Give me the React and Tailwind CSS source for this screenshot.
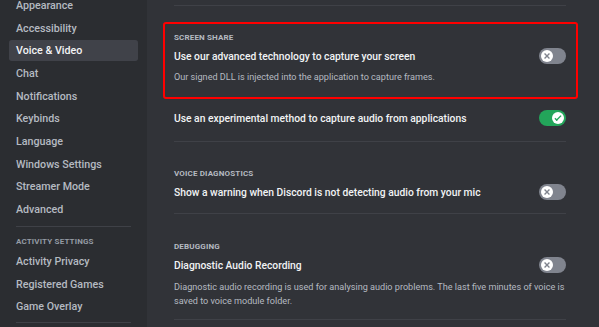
import React from "react";

const sideItems = [
  "Appearance",
  "Accessibility",
  "Voice & Video",
  "Chat",
  "Notifications",
  "Keybinds",
  "Language",
  "Windows Settings",
  "Streamer Mode",
  "Advanced",
];

const activityItems = ["Activity Privacy", "Registered Games", "Game Overlay"];

function SideItem({ label, selected }) {
  return (
    <div
      className={`h-[21.33px] mb-[1.33px] px-[6.67px] pt-[2px] flex items-center rounded-[2.67px] text-[10.7px] font-medium whitespace-nowrap ${
        selected ? "bg-[#404249] text-[#f2f3f5]" : "text-[#b5bac1]"
      }`}
    >
      {label}
    </div>
  );
}

function Toggle({ on }) {
  return (
    <div
      className={`w-[26.67px] h-[16px] shrink-0 rounded-full flex items-center px-[2px] ${
        on ? "bg-[#23a55a] justify-end" : "bg-[#80848e] justify-start"
      }`}
    >
      <div className="w-[12px] h-[12px] rounded-full bg-white flex items-center justify-center">
        {on ? (
          <svg width="12" height="12" viewBox="0 0 20 20">
            <path
              fill="#23a55a"
              d="M7.89561 14.8538L6.30462 13.2629L14.3099 5.25755L15.9009 6.84854L7.89561 14.8538Z"
            />
            <path
              fill="#23a55a"
              d="M4.08643 11.0903L5.67742 9.49929L9.4485 13.2704L7.85751 14.8614L4.08643 11.0903Z"
            />
          </svg>
        ) : (
          <svg width="12" height="12" viewBox="0 0 20 20">
            <path
              fill="#80848e"
              d="M5.13231 6.72963L6.7233 5.13864L14.855 13.2704L13.264 14.8614L5.13231 6.72963Z"
            />
            <path
              fill="#80848e"
              d="M13.2704 5.13864L14.8614 6.72963L6.72963 14.8614L5.13864 13.2704L13.2704 5.13864Z"
            />
          </svg>
        )}
      </div>
    </div>
  );
}

function Header({ children }) {
  return (
    <div className="pt-[1px] text-[8px] leading-[10.67px] font-bold uppercase tracking-[0.02em] text-[#b5bac1] mb-[4.33px]">
      {children}
    </div>
  );
}

function Row({ title, on }) {
  return (
    <div className="h-[16px] flex items-center justify-between">
      <span className="pt-[2px] text-[10.3px] leading-[16px] font-medium text-[#f2f3f5]">{title}</span>
      <Toggle on={on} />
    </div>
  );
}

function Desc({ children, className = "" }) {
  return (
    <div className={`text-[9.1px] text-[#b5bac1] ${className}`}>
      {children}
    </div>
  );
}

export default function App() {
  return (
    <div className="w-[599px] h-[327px] flex overflow-hidden font-['Roboto',sans-serif] antialiased">
      <aside className="w-[147px] shrink-0 bg-[#2b2d31] px-[9.33px] overflow-hidden">
        <div className="-mt-[5.67px]">
          {sideItems.map((s) => (
            <SideItem key={s} label={s} selected={s === "Voice & Video"} />
          ))}
          <div className="mx-[6.67px] mt-[6.3px] mb-[5.33px] h-px bg-[#3f4147]" />
          <div className="px-[6.67px] pt-[4.5px] pb-[3px] text-[8px] leading-[10.67px] font-bold uppercase tracking-[0.02em] text-[#949ba4]">
            Activity Settings
          </div>
          {activityItems.map((s) => (
            <SideItem key={s} label={s} />
          ))}
          <div className="mx-[6.67px] mt-[5.33px] h-px bg-[#3f4147]" />
        </div>
      </aside>

      <main className="flex-1 bg-[#313338] pl-[27px] pr-[33.5px] overflow-hidden">
        <div className="mt-[5px] h-px bg-[#3f4147]" />

        <div className="relative mt-[26.2px]">
          <div className="absolute -left-[10.7px] -right-[12.5px] -top-[10.2px] -bottom-[14.5px] border-2 border-[#ff0000] rounded-[3px] pointer-events-none" />
          <Header>Screen Share</Header>
          <Row title="Use our advanced technology to capture your screen" on={false} />
          <Desc className="mt-[5.33px] pt-[1.5px] leading-[13.33px]">
            Our signed DLL is injected into the application to capture frames.
          </Desc>
        </div>

        <div className="mt-[26px]">
          <Row title="Use an experimental method to capture audio from applications" on={true} />
        </div>
        <div className="mt-[15px] h-px bg-[#3f4147]" />

        <div className="mt-[25.3px]">
          <Header>Voice Diagnostics</Header>
          <Row title="Show a warning when Discord is not detecting audio from your mic" on={false} />
        </div>
        <div className="mt-[13.7px] h-px bg-[#3f4147]" />

        <div className="mt-[26.3px]">
          <Header>Debugging</Header>
          <Row title="Diagnostic Audio Recording" on={false} />
          <Desc className="mt-[6px] pt-[1px] leading-[14.3px]">
            Diagnostic audio recording is used for analysing audio problems. The last five minutes of voice is saved to voice module folder.
          </Desc>
        </div>
        <div className="mt-[10.4px] h-px bg-[#3f4147]" />
      </main>
    </div>
  );
}
